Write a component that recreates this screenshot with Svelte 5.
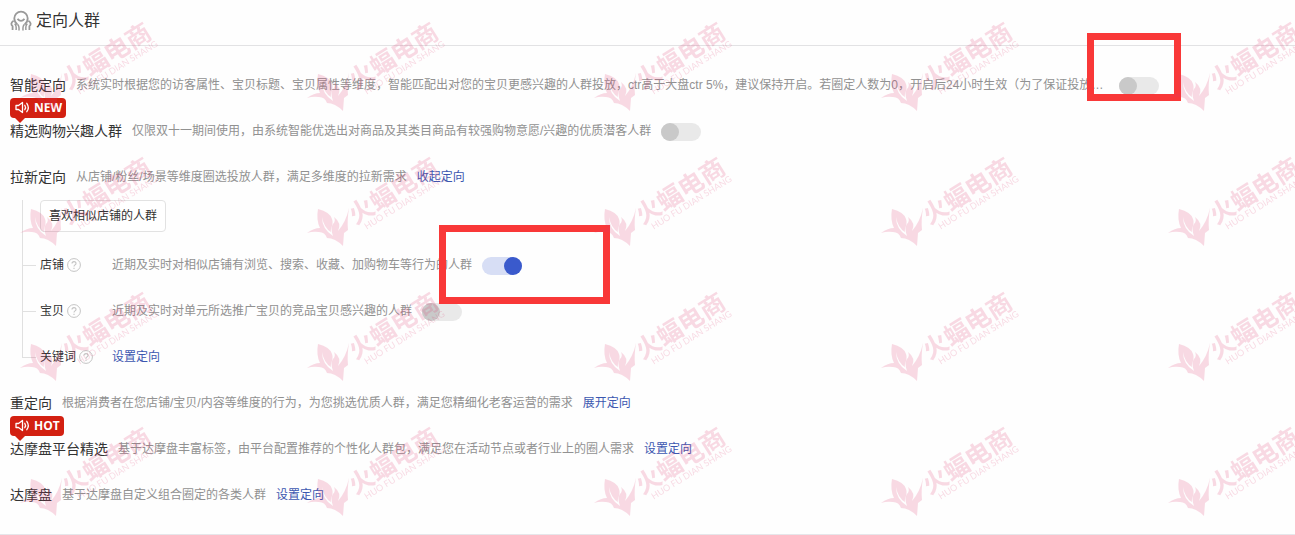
<script lang="ts">
  interface Row {
    id: string;
    name: string;
    desc: string;
    badge?: string;
    link?: string;
    toggle?: boolean;
    on?: boolean;
  }

  let topRows: Row[] = $state([
    {
      id: "smart",
      name: "智能定向",
      desc: "系统实时根据您的访客属性、宝贝标题、宝贝属性等维度，智能匹配出对您的宝贝更感兴趣的人群投放，ctr高于大盘ctr 5%，建议保持开启。若圈定人数为0，开启后24小时生效（为了保证投放效果）",
      toggle: true,
      on: false,
    },
    {
      id: "interest",
      name: "精选购物兴趣人群",
      desc: "仅限双十一期间使用，由系统智能优选出对商品及其类目商品有较强购物意愿/兴趣的优质潜客人群",
      badge: "NEW",
      toggle: true,
      on: false,
    },
    {
      id: "fresh",
      name: "拉新定向",
      desc: "从店铺/粉丝/场景等维度圈选投放人群，满足多维度的拉新需求",
      link: "收起定向",
    },
  ]);

  let subRows: Row[] = $state([
    {
      id: "shop",
      name: "店铺",
      desc: "近期及实时对相似店铺有浏览、搜索、收藏、加购物车等行为的人群",
      toggle: true,
      on: true,
    },
    {
      id: "item",
      name: "宝贝",
      desc: "近期及实时对单元所选推广宝贝的竞品宝贝感兴趣的人群",
      toggle: true,
      on: false,
    },
    { id: "keyword", name: "关键词", desc: "", link: "设置定向" },
  ]);

  let bottomRows: Row[] = $state([
    {
      id: "retarget",
      name: "重定向",
      desc: "根据消费者在您店铺/宝贝/内容等维度的行为，为您挑选优质人群，满足您精细化老客运营的需求",
      link: "展开定向",
    },
    {
      id: "dmp-picked",
      name: "达摩盘平台精选",
      desc: "基于达摩盘丰富标签，由平台配置推荐的个性化人群包，满足您在活动节点或者行业上的圈人需求",
      badge: "HOT",
      link: "设置定向",
    },
    {
      id: "dmp",
      name: "达摩盘",
      desc: "基于达摩盘自定义组合圈定的各类人群",
      link: "设置定向",
    },
  ]);
</script>

{#snippet controls(row: Row)}
  {#if row.desc}
    <span class="desc">{row.desc}</span>
  {/if}
  {#if row.toggle}
    <input class="switch" type="checkbox" id={row.id} bind:checked={row.on}>
  {/if}
  {#if row.link}
    <a href="#{row.id}">{row.link}</a>
  {/if}
{/snippet}

{#snippet mainRow(row: Row)}
  <div class="row">
    <div class="name">
      {#if row.badge}
        <span class="badge">
          <svg width="16" height="14" viewBox="0 0 16 14" fill="none" stroke="#fff" stroke-width="1.3" stroke-linejoin="round" stroke-linecap="round" aria-hidden="true">
            <path d="M1 4.500H3.500L7.500 1.500v10L3.500 8.500H1z" />
            <path d="M9.800 4.300q1.500 2.200 0 4.400M11.800 2.300q3 4.200 0 8.400" />
          </svg>
          {row.badge}
        </span>
      {/if}
      {#if row.toggle}
        <label for={row.id}>{row.name}</label>
      {:else}
        {row.name}
      {/if}
    </div>
    {@render controls(row)}
  </div>
{/snippet}

<main>
  <header>
    <svg width="22" height="22" viewBox="0 0 22 22" fill="none" stroke="#999" stroke-width="1.8" aria-hidden="true">
      <path d="M7.400 14.500C5.200 13 4.300 10.800 4.300 8.300a6.700 6.700 0 0 1 13.400 0c0 2.500-.9 4.700-3.100 6.200" />
      <path d="M7.500 8.800q3.500 4 7 0" />
      <path d="M3.600 10.800C.8 12.600.8 14.800 2.600 16.300V20M18.400 10.800c2.800 1.800 2.800 4 1 5.500V20" />
      <path d="M4.600 13.800q2 1.200 1.500 6.200M17.400 13.800q-2 1.200-1.500 6.200M7.400 14.500q2 .8 1.600 6M14.600 14.500q-2 .8-1.600 6" stroke-width="1.500" />
    </svg>
    <h1>定向人群</h1>
  </header>

  <section>
    {#each topRows as row (row.id)}
      {@render mainRow(row)}
    {/each}

    <div class="tree">
      <button type="button">喜欢相似店铺的人群</button>
      {#each subRows as row (row.id)}
        <div class="row branch">
          <div class="sub-name">
            {#if row.toggle}
              <label for={row.id}>{row.name}</label>
            {:else}
              {row.name}
            {/if}
            <svg width="14" height="14" viewBox="0 0 14 14" fill="none" stroke="#c4c4c4" aria-hidden="true">
              <circle cx="7" cy="7" r="6.400" />
              <path d="M5 5.600C5 3 9 3 9 5.400 9 6.900 7 6.900 7 8.500M7 9.700v1.200" stroke-width="1.100" />
            </svg>
          </div>
          {@render controls(row)}
        </div>
      {/each}
    </div>

    {#each bottomRows as row (row.id)}
      {@render mainRow(row)}
    {/each}
  </section>

  <div class="mark mark-smart"></div>
  <div class="mark mark-shop"></div>

  <svg class="watermark" width="100%" height="100%" aria-hidden="true">
    <defs>
      <pattern id="brand" width="287" height="135" patternUnits="userSpaceOnUse">
        <g fill="#e0386e">
          <path d="M20 98q7-5 13-5-4-8-2-19 12 3 14 10c2 6-2 9-1 13q-7-4-9-15 0 12 11 19-3-8 0-12 3-3 1-7 8 6 4 14 8-9 11-23-2 12-1 22l-4 3-1 13q-8-8-16-8-2-6-8-6-6-1-12 1z" />
          <g transform="translate(74 76) rotate(-32)">
            <text class="brand-cn" x="-12" y="9">火蝠电商</text>
            <text class="brand-en" x="-5" y="19">HUO FU DIAN SHANG</text>
          </g>
        </g>
      </pattern>
    </defs>
    <rect width="100%" height="100%" fill="url(#brand)" />
  </svg>
</main>

<style>
  :global(body) {
    background: #fefefe;
  }

  main {
    position: relative;
    overflow: hidden;
    color: #333;
    font-family: "Liberation Sans", "Noto Sans CJK SC", sans-serif;
    font-size: 12px;
    line-height: 18px;
  }

  header {
    display: flex;
    align-items: center;
    gap: 4px;
    height: 41px;
    padding: 0 10px 4px;
    border-bottom: 1px solid #e2e2e4;
  }

  h1 {
    margin: 0;
    font-size: 16px;
    font-weight: 400;
    line-height: 24px;
  }

  section {
    padding: 16px 10px;
    border-bottom: 1px solid #e6e6ea;
  }

  .row {
    display: flex;
    align-items: center;
    gap: 10px;
    height: 46px;
    white-space: nowrap;
  }

  .name {
    position: relative;
    font-size: 14px;
    line-height: 20px;
  }

  .desc {
    max-width: 81%;
    overflow: hidden;
    color: #919191;
    text-overflow: ellipsis;
  }

  a {
    color: #3c57b0;
    text-decoration: none;
  }

  .switch {
    flex: none;
    width: 40px;
    height: 18px;
    margin: 2px 0 0;
    appearance: none;
    border-radius: 9px;
    background: #e9e9e9;
    cursor: pointer;
  }

  .switch::before {
    content: "";
    display: block;
    width: 18px;
    height: 18px;
    border-radius: 50%;
    background: #c9c9c9;
  }

  .switch:checked {
    background: #d7def5;
  }

  .switch:checked::before {
    margin-left: auto;
    background: #3a5acc;
  }

  .badge {
    position: absolute;
    bottom: 100%;
    left: 0;
    display: flex;
    align-items: center;
    gap: 3px;
    height: 20px;
    margin-bottom: 3px;
    padding: 0 4px 0 5px;
    border-radius: 4px;
    background: #d32011;
    color: #fff;
    font-family: "Open Sans", sans-serif;
    font-size: 12px;
    font-weight: 700;
  }

  .badge::after {
    content: "";
    position: absolute;
    top: 100%;
    left: 5px;
    border: 5px solid transparent;
    border-top-color: #d32011;
    border-bottom: 0;
  }

  .tree {
    position: relative;
    margin-left: 12px;
    padding-left: 18px;
  }

  .tree::before {
    content: "";
    position: absolute;
    top: 0;
    bottom: 23px;
    left: 0;
    border-left: 1px solid #e0e0e0;
  }

  button {
    display: block;
    height: 32px;
    margin-bottom: 10px;
    padding: 0 8px;
    border: 1px solid #e2e2e2;
    border-radius: 4px;
    background: #fff;
    color: #333;
    font: inherit;
  }

  .branch {
    position: relative;
  }

  .branch::before {
    content: "";
    position: absolute;
    top: 50%;
    left: -18px;
    width: 14px;
    border-top: 1px solid #e0e0e0;
  }

  .sub-name {
    display: flex;
    align-items: center;
    gap: 3px;
    min-width: 62px;
  }

  .mark {
    position: absolute;
    box-sizing: border-box;
    border: 7px solid #f93838;
  }

  .mark-smart {
    top: 33px;
    left: 1087px;
    width: 94px;
    height: 68px;
  }

  .mark-shop {
    top: 225px;
    left: 439px;
    width: 171px;
    height: 79px;
  }

  .watermark {
    position: absolute;
    inset: 0;
    opacity: 0.18;
    pointer-events: none;
  }

  .brand-cn {
    font-family: "Noto Sans CJK SC", sans-serif;
    font-size: 25px;
    font-weight: 700;
  }

  .brand-en {
    font-family: Lato, sans-serif;
    font-size: 9px;
  }
</style>
